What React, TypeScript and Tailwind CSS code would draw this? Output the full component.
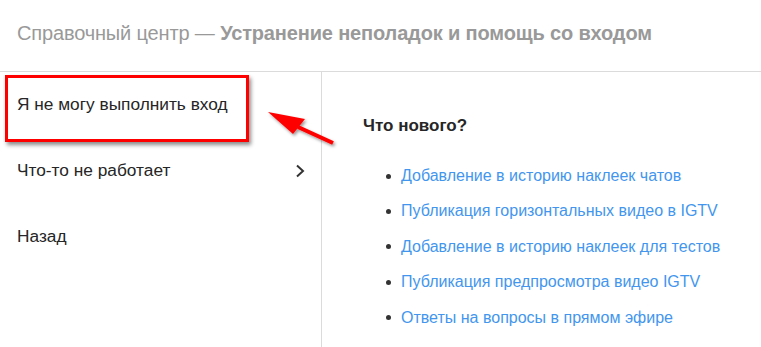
import React from 'react';

const links = [
  'Добавление в историю наклеек чатов',
  'Публикация горизонтальных видео в IGTV',
  'Добавление в историю наклеек для тестов',
  'Публикация предпросмотра видео IGTV',
  'Ответы на вопросы в прямом эфире',
];

const App = () => {
  return (
    <div className="relative w-[761px] h-[347px] overflow-hidden bg-white font-['Liberation_Sans',Arial,sans-serif]">
      <header className="h-[72px] border-b border-[#dbdbdb] flex items-center pl-[17px] pb-[6px]">
        <h1 className="text-[20px] text-[#999999] tracking-[-0.15px]">
          Справочный центр — <span className="font-bold">Устранение неполадок и помощь со входом</span>
        </h1>
      </header>

      <div className="flex h-[275px]">
        <nav className="w-[322px] shrink-0 border-r border-[#dbdbdb] relative">
          <div className="h-[66px] flex items-center pl-[17px] text-[17.3px] text-[#262626]">
            Я не могу выполнить вход
          </div>
          <div className="h-[66px] flex items-center justify-between pl-[17px] pr-[16px] text-[17.3px] text-[#262626]">
            <span>Что-то не работает</span>
            <svg width="10" height="14" viewBox="0 0 10 14">
              <polyline points="2,1.5 8,7 2,12.5" fill="none" stroke="#333" strokeWidth="2" />
            </svg>
          </div>
          <div className="h-[66px] flex items-center pl-[17px] text-[17.3px] text-[#262626]">
            Назад
          </div>

          {/* annotation box */}
          <div className="absolute left-[5px] top-[3px] w-[244px] h-[67px] border-[3px] border-[#ff0000] shadow-[2px_3px_4px_rgba(0,0,0,0.45)] pointer-events-none" />
        </nav>

        <section className="pl-[41px] pt-[44px]">
          <h2 className="text-[17px] font-bold text-[#262626] leading-[20px]">Что нового?</h2>
          <ul className="mt-[30px] pl-[23px] flex flex-col gap-[15.4px]">
            {links.map((t) => (
              <li key={t} className="flex items-center h-[20px]">
                <span className="w-[5px] h-[5px] rounded-full bg-[#333] mr-[10px]" />
                <a className="text-[16px] text-[#4396ee] leading-[20px]">{t}</a>
              </li>
            ))}
          </ul>
        </section>
      </div>

      {/* annotation arrow */}
      <svg className="absolute left-0 top-0 pointer-events-none" width="761" height="347" viewBox="0 0 761 347">
        <defs>
          <filter id="sh" x="-20%" y="-20%" width="140%" height="140%">
            <feDropShadow dx="1.5" dy="2" stdDeviation="1.5" floodColor="#000" floodOpacity="0.4" />
          </filter>
        </defs>
        <g filter="url(#sh)">
          <line x1="298" y1="127" x2="333" y2="143" stroke="#ff0000" strokeWidth="4" />
          <polygon points="268,112 305,119 293,134" fill="#ff0000" />
        </g>
      </svg>
    </div>
  );
};

export default App;
